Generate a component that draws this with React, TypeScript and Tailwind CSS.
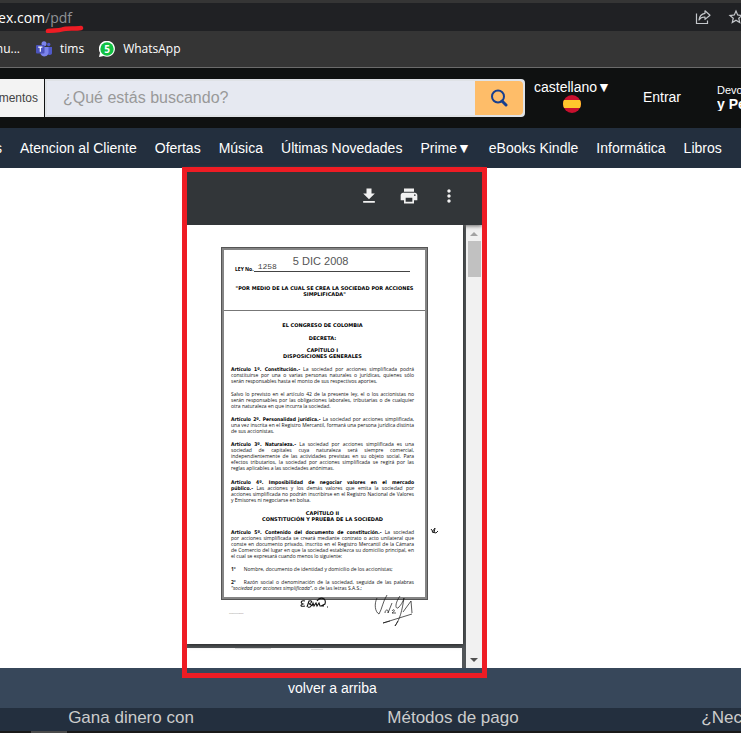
import React from "react";
import { MdFileDownload, MdPrint, MdMoreVert, MdStarBorder } from "react-icons/md";

const navItems = [
  "Atencion al Cliente",
  "Ofertas",
  "Música",
  "Últimas Novedades",
  "Prime▼",
  "eBooks Kindle",
  "Informática",
  "Libros",
];

type Line = { b?: string; t?: string; i?: string; after?: string; last?: boolean };

function Paragraph({ lines, className = "" }: { lines: Line[]; className?: string }) {
  return (
    <p className={className}>
      {lines.map((l, n) => (
        <span
          key={n}
          className={
            l.last
              ? "block whitespace-nowrap"
              : "block whitespace-nowrap text-justify [text-align-last:justify]"
          }
        >
          {l.b && <b className="font-['DejaVu_Sans_Condensed','DejaVu_Sans',sans-serif] leading-[0] text-black">{l.b}</b>}
          {l.b && l.t ? " " : ""}
          {l.t}
          {l.i && <i>{l.i}</i>}
          {l.after}
        </span>
      ))}
    </p>
  );
}

function ShareIcon() {
  return (
    <svg width="16" height="16" viewBox="0 0 16 16" fill="none" stroke="#c4c7cb" strokeWidth="1.2" aria-hidden="true">
      <path d="M1.5 4.5V14.5H12.5V11.5" />
      <path d="M10 1.8L15 6.2L10 10.4V8C7 7.8 5.300 8.800 4 11C4.400 7.200 6.500 4.800 10 4.300Z" strokeLinejoin="round" />
    </svg>
  );
}

function TeamsIcon() {
  return (
    <svg width="16" height="16" viewBox="0 0 16 16" aria-hidden="true">
      <circle cx="12.700" cy="3.500" r="1.700" fill="#5059c9" />
      <path d="M11 6h5v5a2.500 2.500 0 0 1-5 1z" fill="#5059c9" />
      <circle cx="8" cy="2.700" r="2.500" fill="#7b83eb" />
      <path d="M4.500 6h8v5.500a4.200 4.200 0 0 1-8 1.500z" fill="#7b83eb" />
      <rect x="0" y="4" width="8.500" height="8.500" rx="1" fill="#4b53bc" />
      <path d="M2.200 6.200h4.200M4.300 6.200v4.500" stroke="#fff" strokeWidth="1.200" />
    </svg>
  );
}

function WhatsAppIcon() {
  return (
    <span className="relative flex size-4 items-center justify-center">
      <svg className="absolute inset-0" width="16" height="16" viewBox="0 0 16 16" aria-hidden="true">
        <path d="M0 16L1 11.800A8 8 0 1 1 4.500 15Z" fill="#fff" />
        <circle cx="8" cy="8" r="6.700" fill="#12c143" />
      </svg>
      <span className="relative text-[10px] leading-4 font-bold">5</span>
    </span>
  );
}

function BrowserBar() {
  return (
    <div className="overflow-hidden bg-[#353535] pt-[3px] font-['Open_Sans',sans-serif] text-white">
      <div className="flex h-7 items-center justify-between bg-[#202124]">
        <div className="relative flex w-[72px] justify-end text-[14px] whitespace-nowrap">
          tex.com<span className="text-[#8f9296]">/pdf</span>
          <svg className="absolute top-[18px] left-[45px]" width="40" height="8" viewBox="0 0 40 8" aria-hidden="true">
            <path d="M3 6C8 5 13 6 17 4.500S30 4 36 3" fill="none" stroke="#ee1c24" strokeWidth="4.500" strokeLinecap="round" />
          </svg>
        </div>
        <div className="-mr-1 flex items-center gap-4">
          <button aria-label="Compartir"><ShareIcon /></button>
          <button aria-label="Favorito"><MdStarBorder size={18} color="#c4c7cb" /></button>
        </div>
      </div>
      <div className="flex h-9 items-center text-[12px]">
        <a href="#nu" className="flex w-5 justify-end">nu...</a>
        <a href="#tims" className="ml-4 flex items-center gap-2"><TeamsIcon />tims</a>
        <a href="#whatsapp" className="ml-[15px] flex items-center gap-2"><WhatsAppIcon />WhatsApp</a>
      </div>
      <div className="h-px bg-[#6b6b6b]" />
    </div>
  );
}

function ShopHeader() {
  return (
    <header className="overflow-hidden text-white">
      <div className="flex h-[60px] items-start bg-[#0f1111] pt-[11px]">
        <button className="flex h-[38px] w-11 shrink-0 items-center justify-end bg-[#f3f3f3] pr-[6px] text-[12px] text-[#444]">
          mentos
        </button>
        <form className="ml-px flex h-[38px] min-w-0 flex-1 rounded-r border-2 border-[#dfe2e6] bg-[#e6e9f1]" onSubmit={(e) => e.preventDefault()}>
          <input
            aria-label="Buscar"
            placeholder="¿Qué estás buscando?"
            className="min-w-0 flex-1 px-4 text-[16px] text-[#333] outline-none placeholder:text-[#999]"
          />
          <button aria-label="Buscar" className="flex w-12 items-center justify-center rounded-r bg-[#febd69]">
            <svg width="18" height="18" viewBox="0 0 18 18" fill="none" stroke="#173f8f" aria-hidden="true">
              <circle cx="8" cy="7.500" r="6" strokeWidth="2" />
              <path d="M12 12L16 16" strokeWidth="3" strokeLinecap="round" />
            </svg>
          </button>
        </form>
        <button className="ml-[9px] flex shrink-0 flex-col items-center text-[14px] leading-4">
          <span>castellano▼</span>
          <svg width="18" height="18" viewBox="0 0 18 18" aria-hidden="true">
            <clipPath id="flag"><circle cx="9" cy="9" r="9" /></clipPath>
            <g clipPath="url(#flag)">
              <rect width="18" height="18" fill="#c8102e" />
              <rect y="5" width="18" height="8" fill="#ffc72c" />
            </g>
          </svg>
        </button>
        <a href="#entrar" className="ml-8 flex h-9 shrink-0 items-center text-[14px]">Entrar</a>
        <a href="#pedidos" className="ml-9 block w-6 shrink-0 overflow-hidden pt-1 whitespace-nowrap">
          <span className="block text-[11px] leading-[14px]">Devoluciones</span>
          <span className="block text-[14px] leading-[14px] font-bold">y Pedidos</span>
        </a>
      </div>
      <nav className="flex h-10 items-center gap-[18px] overflow-hidden bg-[#232f3e] text-[14px] whitespace-nowrap">
        <a href="#s" className="flex w-[2px] justify-end">s</a>
        {navItems.map((item) => (
          <a key={item} href="#">{item}</a>
        ))}
      </nav>
    </header>
  );
}

const heading = "text-center font-bold text-black font-['DejaVu_Sans',sans-serif]";

function LawPage() {
  return (
    <article className="relative mr-[3px] h-[419px] bg-white pt-[23px] pl-[35px] font-['Open_Sans',sans-serif] text-[5px] leading-[6px] text-[#111] shadow-[0_1px_4px_#222]">
      <div className="h-[351px] w-[205px] border-2 border-[#858585] outline outline-[#555]">
        <div className="h-[61px] border-b border-[#777] px-[11px] pt-1 font-bold text-black">
          <div className="flex h-[18px] items-end">
            <span>LEY No.</span>
            <span className="mr-1 flex flex-1 items-end border-b border-[#444] pl-1 font-['Liberation_Mono',monospace] font-normal text-[#444]">
              <span className="text-[8px] leading-[8px]">1258</span>
              <span className="ml-4 pb-1 font-['Liberation_Sans',sans-serif] text-[11px] leading-[11px] text-[#555]">5 DIC 2008</span>
            </span>
          </div>
          <p className={"-mx-2 pt-[13px] whitespace-nowrap " + heading}>
            "POR MEDIO DE LA CUAL SE CREA LA SOCIEDAD POR ACCIONES<br />SIMPLIFICADA"
          </p>
        </div>
        <div className="pt-[11px] pr-[11px] pl-[7px]">
          <div className={heading}>
            <p>EL CONGRESO DE COLOMBIA</p>
            <p className="pt-[7px]">DECRETA:</p>
            <p className="pt-[6px]">CAPÍTULO I<br />DISPOSICIONES GENERALES</p>
          </div>
          <Paragraph className="mt-[7px]" lines={[
            { b: "Artículo 1º. Constitución.-", t: "La sociedad por acciones simplificada podrá" },
            { t: "constituirse por una o varias personas naturales o jurídicas, quienes sólo" },
            { t: "serán responsables hasta el monto de sus respectivos aportes.", last: true },
          ]} />
          <Paragraph className="mt-[7px]" lines={[
            { t: "Salvo lo previsto en el artículo 42 de la presente ley, el o los accionistas no" },
            { t: "serán responsables por las obligaciones laborales, tributarias o de cualquier" },
            { t: "otra naturaleza en que incurra la sociedad.", last: true },
          ]} />
          <Paragraph className="mt-[7px]" lines={[
            { b: "Artículo 2º. Personalidad jurídica.-", t: "La sociedad por acciones simplificada," },
            { t: "una vez inscrita en el Registro Mercantil, formará una persona jurídica distinta" },
            { t: "de sus accionistas.", last: true },
          ]} />
          <Paragraph className="mt-[7px]" lines={[
            { b: "Artículo 3º. Naturaleza.-", t: "La sociedad por acciones simplificada es una" },
            { t: "sociedad de capitales cuya naturaleza será siempre comercial," },
            { t: "independientemente de las actividades previstas en su objeto social. Para" },
            { t: "efectos tributarios, la sociedad por acciones simplificada se regirá por las" },
            { t: "reglas aplicables a las sociedades anónimas.", last: true },
          ]} />
          <Paragraph className="mt-[8px]" lines={[
            { b: "Artículo 4º. Imposibilidad de negociar valores en el mercado" },
            { b: "público.-", t: "Las acciones y los demás valores que emita la sociedad por" },
            { t: "acciones simplificada no podrán inscribirse en el Registro Nacional de Valores" },
            { t: "y Emisores ni negociarse en bolsa.", last: true },
          ]} />
          <p className={"mt-[7px] " + heading}>
            CAPÍTULO II<br />CONSTITUCIÓN Y PRUEBA DE LA SOCIEDAD
          </p>
          <Paragraph className="mt-[7px]" lines={[
            { b: "Artículo 5º. Contenido del documento de constitución.-", t: "La sociedad" },
            { t: "por acciones simplificada se creará mediante contrato o acto unilateral que" },
            { t: "conste en documento privado, inscrito en el Registro Mercantil de la Cámara" },
            { t: "de Comercio del lugar en que la sociedad establezca su domicilio principal, en" },
            { t: "el cual se expresará cuando menos lo siguiente:", last: true },
          ]} />
          <div className="mt-[7px] flex gap-2"><b>1º</b>Nombre, documento de identidad y domicilio de los accionistas;</div>
          <div className="mt-[7px] flex gap-2">
            <b>2º</b>
            <span className="flex-1 whitespace-nowrap [text-align-last:justify]">Razón social o denominación de la sociedad, seguida de las palabras</span>
          </div>
          <Paragraph lines={[{ i: "\"sociedad por acciones simplificada\"", after: ", o de las letras S.A.S.;", last: true }]} />
        </div>
      </div>
      <svg className="absolute top-[370px] left-[110px]" width="116" height="34" viewBox="0 0 116 34" fill="none" stroke="#111" aria-hidden="true">
        <path d="M8 6C4 5 3 8 6 9C3 10 3 12 8 11M10 12l2-6c4-1 3 2 0 3 4 0 2 4-1 3M15 11l1-3 1 3 2-3 1 3 2-3 1 3h4M20 6C23 1 30 3 28 9L24 11M30 12h1" strokeWidth="1.100" />
        <path d="M80 3C77 9 78 17 82 19C85 14 86 6 90 0M88 18C88 14 92 14 91 18M91 18L95 8M95 16C97 13 99 16 95 18H99M103 1C98 8 98 14 101 13C104 10 106 7 107 3M107 3C105 16 103 24 98 31M106 17L114 6L115 18M115 19L86 28L93 26M98 31L101 26" strokeWidth="0.700" />
      </svg>
      <svg className="absolute top-[302px] left-[243px]" width="10" height="8" viewBox="0 0 10 8" fill="none" stroke="#222" aria-hidden="true">
        <path d="M1 2l3 4 1-5-3 4 4 1 2-2" />
      </svg>
      <span className="absolute top-[385px] left-[42px] text-[3px] leading-[6px]">---------------</span>
    </article>
  );
}

function PdfViewer() {
  return (
    <section className="relative ml-[187px] h-[500px] w-[295px] bg-[#525659]">
      <div className="relative flex h-[57px] items-center justify-end gap-5 bg-[#323639] pr-[23px] pb-[2px] text-[#f1f1f1] shadow-[0_1px_4px_#666]">
        <button aria-label="Descargar"><MdFileDownload size={20} /></button>
        <button aria-label="Imprimir"><MdPrint size={20} /></button>
        <button aria-label="Más acciones"><MdMoreVert size={20} /></button>
      </div>
      <div className="flex h-[443px]">
        <div className="min-w-0 flex-1 overflow-hidden">
          <LawPage />
          <div className="mt-1 mr-1 flex h-5 gap-10 bg-white pl-12">
            <div className="h-px w-9 bg-[#ddd]" />
            <div className="mt-px h-px w-3 bg-[#ddd]" />
          </div>
        </div>
        <div className="flex w-4 flex-col items-center bg-[#f1f1f1] pt-[7px] pb-[6px]">
          <div className="border-x-4 border-b-4 border-transparent border-b-[#a3a3a3]" />
          <div className="mt-[5px] h-9 w-[13px] bg-[#c1c1c1]" />
          <div className="mt-auto border-x-4 border-t-4 border-transparent border-t-[#505050]" />
        </div>
      </div>
      <div className="pointer-events-none absolute -inset-x-[5px] -top-px -bottom-[10px] border-[5px] border-[#ee1c24]" />
    </section>
  );
}

export default function App() {
  return (
    <div className="overflow-hidden bg-white font-['Liberation_Sans',Arial,sans-serif]">
      <BrowserBar />
      <ShopHeader />
      <main>
        <PdfViewer />
      </main>
      <footer>
        <a href="#top" className="flex h-10 items-center bg-[#37475a] pl-[288px] text-[14px] text-white">volver a arriba</a>
        <div className="-mr-[195px] -ml-[30px] grid h-[23px] grid-cols-3 items-center overflow-hidden bg-[#232f3e] pb-1 text-center text-[17px] leading-5 text-[#ccc]">
          <h2>Gana dinero con</h2>
          <h2>Métodos de pago</h2>
          <h2>¿Necesita soporte?</h2>
        </div>
        <div className="h-[2px] bg-[#191919] pl-[31px]"><div className="h-full w-9 bg-[#4a4a4a]" /></div>
      </footer>
    </div>
  );
}
